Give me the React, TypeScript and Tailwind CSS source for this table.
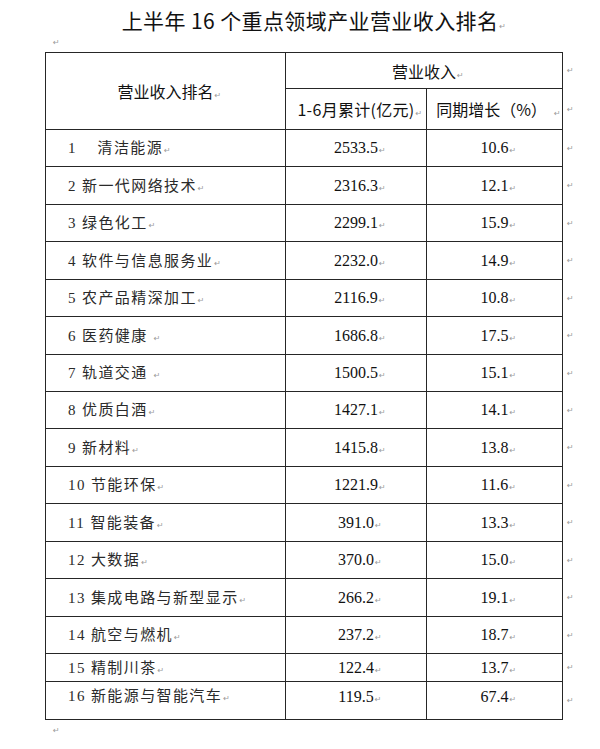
import type { ReactNode } from "react";

const rows: { label: string; total: string; growth: string; h: number }[] = [
  { label: "1    清洁能源", total: "2533.5", growth: "10.6", h: 37 },
  { label: "2 新一代网络技术", total: "2316.3", growth: "12.1", h: 38 },
  { label: "3 绿色化工", total: "2299.1", growth: "15.9", h: 37 },
  { label: "4 软件与信息服务业", total: "2232.0", growth: "14.9", h: 38 },
  { label: "5 农产品精深加工", total: "2116.9", growth: "10.8", h: 37 },
  { label: "6 医药健康 ", total: "1686.8", growth: "17.5", h: 38 },
  { label: "7 轨道交通 ", total: "1500.5", growth: "15.1", h: 37 },
  { label: "8 优质白酒", total: "1427.1", growth: "14.1", h: 37 },
  { label: "9 新材料", total: "1415.8", growth: "13.8", h: 38 },
  { label: "10 节能环保", total: "1221.9", growth: "11.6", h: 37 },
  { label: "11 智能装备", total: "391.0", growth: "13.3", h: 38 },
  { label: "12 大数据", total: "370.0", growth: "15.0", h: 37 },
  { label: "13 集成电路与新型显示", total: "266.2", growth: "19.1", h: 38 },
  { label: "14 航空与燃机", total: "237.2", growth: "18.7", h: 37 },
  { label: "15 精制川茶", total: "122.4", growth: "13.7", h: 28 },
  { label: "16 新能源与智能汽车", total: "119.5", growth: "67.4", h: 38 },
];

// Word-style paragraph mark, takes no width so centred text stays centred
function Mark({ className = "" }: { className?: string }) {
  return (
    <span
      className={`inline-block w-[8px] -mr-[8px] pl-[1px] align-baseline text-[8px] leading-none text-[#9a9a9a] ${className}`}
      style={{ fontFamily: '"DejaVu Sans", sans-serif' }}
    >
      ↵
    </span>
  );
}

function RowEnd({ children }: { children?: ReactNode }) {
  return <div className="flex w-[14px] shrink-0 items-center pl-[3px]">{children ?? <Mark />}</div>;
}

const serif = { fontFamily: '"Liberation Serif", "Noto Sans CJK SC", serif' };
const sans = { fontFamily: '"Noto Sans CJK SC", "Liberation Sans", sans-serif' };

export default function App() {
  return (
    <div className="h-[749px] w-[600px] bg-white text-[#111]">
      <div className="pt-[6px] pl-[20px] text-center">
        <h1 className="text-[21px] leading-[28px] font-normal tracking-[0.4px]" style={sans}>
          上半年 16 个重点领域产业营业收入排名
          <Mark />
        </h1>
      </div>
      <div className="flex h-[18px] items-center pl-[52px]">
        <Mark />
      </div>

      <div className="ml-[45px]">
        {/* header */}
        <div className="flex">
          <div className="flex h-[78px] w-[241px] shrink-0 items-center justify-center border-t border-b border-l border-r border-[#262626] pt-[1px]">
            <span className="text-[16px] leading-none" style={sans}>
              营业收入排名
              <Mark />
            </span>
          </div>
          <div className="flex w-[291px] shrink-0 flex-col">
            <div className="flex">
              <div className="flex h-[37px] w-[277px] shrink-0 items-center justify-center border-t border-b border-r border-[#262626] pt-[1px]">
                <span className="text-[16px] leading-none" style={sans}>
                  营业收入
                  <Mark />
                </span>
              </div>
              <RowEnd />
            </div>
            <div className="flex">
              <div className="flex h-[41px] w-[141px] shrink-0 items-center justify-center border-b border-r border-[#262626]">
                <span className="text-[16px] leading-none whitespace-pre tracking-[0.3px]" style={sans}>
                  1-6月累计(亿元)
                  <Mark />
                </span>
              </div>
              <div className="flex h-[41px] w-[136px] shrink-0 items-center justify-center border-b border-r border-[#262626]">
                <span className="text-[16px] leading-none whitespace-pre" style={sans}>
                  同期增长（%）
                  <Mark className="ml-[6px]" />
                </span>
              </div>
              <RowEnd />
            </div>
          </div>
        </div>

        {/* body */}
        {rows.map((r, i) => {
          const last = i === rows.length - 1;
          return (
            <div key={r.label} className="flex">
              <div
                className={`flex w-[241px] shrink-0 border-b border-l border-r border-[#262626] pl-[22px] ${last ? "items-start pt-[5px]" : "items-center"}`}
                style={{ height: r.h }}
              >
                <span className="text-[15px] leading-[18px] tracking-[1.4px] whitespace-pre text-[#2a2a2a]" style={serif}>
                  {r.label}
                  <Mark />
                </span>
              </div>
              <div
                className={`flex w-[141px] shrink-0 justify-center border-b border-r border-[#262626] ${last ? "items-start pt-[6px]" : "items-center"}`}
                style={{ height: r.h }}
              >
                <span className="text-[16px] leading-[18px]" style={serif}>
                  {r.total}
                  <Mark />
                </span>
              </div>
              <div
                className={`flex w-[136px] shrink-0 justify-center border-b border-r border-[#262626] ${last ? "items-start pt-[6px]" : "items-center"}`}
                style={{ height: r.h }}
              >
                <span className="text-[16px] leading-[18px]" style={serif}>
                  {r.growth}
                  <Mark />
                </span>
              </div>
              <RowEnd />
            </div>
          );
        })}
      </div>

      <div className="flex h-[22px] items-center pl-[52px]">
        <Mark />
      </div>
    </div>
  );
}
